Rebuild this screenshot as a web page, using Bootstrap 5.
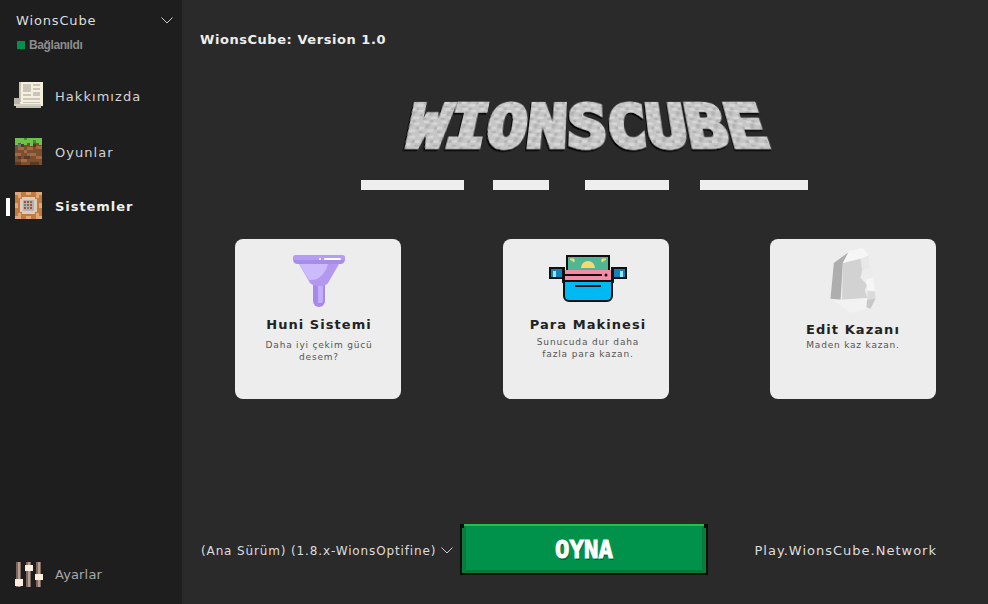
<!DOCTYPE html>
<html lang="tr">
<head>
<meta charset="utf-8">
<title>WionsCube</title>
<link href="https://cdn.jsdelivr.net/npm/bootstrap@5.3.0/dist/css/bootstrap.min.css" rel="stylesheet">
<style>
html,body{height:100%;margin:0}
body{background:#2a2a2a;font-family:"DejaVu Sans",Verdana,sans-serif;overflow:hidden}
.shell{height:604px}
.side{width:182px;background:#1e1e1e;flex:none;color:#ddd}
.acct{padding:12px 9px 0 16px;font-size:13px;letter-spacing:.85px;line-height:17px;color:#ddd}
.acct svg{display:block}
.stat{padding:9px 0 0 17px;font:bold 12px/14px "Liberation Sans",Arial,sans-serif;letter-spacing:-.4px;color:#8c8c8c;gap:4px}
.dot{width:8px;height:8px;background:#00924a;display:block}
.menu{padding-top:31px}
.entry{height:28px;padding:0 0 0 14px;margin-bottom:28px;color:#d4d4d4;font-size:13px;letter-spacing:1.05px;position:relative;gap:11px}
.entry:hover{color:#fff}
.entry.cur{color:#eee;font-weight:700;margin-top:-2px;letter-spacing:.95px}
.entry.cur::before{content:"";position:absolute;left:6px;top:5px;width:4px;height:18px;background:#fff}
.entry svg{flex:none;width:30px;height:30px;margin-bottom:2px}
.foot-entry{color:#a8a8a8;font-size:13px;letter-spacing:.15px;margin:0 0 15px}
.stage{min-width:0;padding:0}
.ttl{font-weight:700;font-size:13px;letter-spacing:.55px;color:#eee;margin:32px 0 0 18px;line-height:16px}
.logo{display:block;margin:49px auto 0 220px;width:370px;height:56px;transform:perspective(300px) rotateX(30deg);overflow:visible}
.logotext{font:700 67px "DejaVu Sans Mono",monospace;stroke-width:5;stroke-linejoin:miter}
.strips{margin:27px 0 0 179px}
.strips i{display:block;height:10px;background:#eee}
.s1{width:103px;margin-right:29px}.s2{width:56px;margin-right:36px}.s3{width:84px;margin-right:31px}.s4{width:108px}
.cards{margin:49px 0 0 53px;gap:102px}
.tile{width:166px;height:160px;background:#ededed;border:0;border-radius:8px;color:#222;flex:none}
.tile:nth-child(2){margin-right:-1px}
.tile h3{font:700 13px/16px "DejaVu Sans",Verdana,sans-serif;letter-spacing:1.05px;margin:0;color:#222}
.tile p{font-size:9px;line-height:11.5px;letter-spacing:.8px;color:#555;margin:0}
.t1{padding:16px 20px 0 22px}.t1 svg{margin-bottom:10px}.t1 h3{margin-bottom:7px}
.t2{padding:16px 18px 0 22px}.t2 svg{margin-bottom:15px}.t2 h3{margin-bottom:3px}.t2 p{line-height:12px;letter-spacing:.85px}
.t3{padding:9px 20px 0}.t3 svg{margin-bottom:9px}.t3 h3{margin-bottom:2px}.t3 p{letter-spacing:.8px}
.dock{margin:auto 51px 29px 19px}
.ver{font-size:12px;letter-spacing:.87px;color:#ddd;gap:5px;width:259px;flex:none;padding-top:2px}
.play{width:248px;height:51px;padding:0;border-radius:0;border:2px solid #0a0f0a;border-top-color:#22c24a;background:#00924a;box-shadow:inset 4px 0 #0a7a40,inset -4px 0 #0a7a40,inset 0 -3px #067a3c;color:#fff;font:700 24px/1 "DejaVu Sans Mono",monospace;letter-spacing:0;text-shadow:1px 2px #06603a;-webkit-text-stroke:1px #fff;position:relative;flex:none}
.play:hover{background:#00924a;color:#fff}
.play::before,.play::after{content:"";position:absolute;top:-2px;width:4px;height:4px;background:#0a0f0a}
.play::before{left:-2px}.play::after{right:-2px}
.srv{font-size:13px;letter-spacing:1px;color:#ddd;margin-left:auto;white-space:nowrap;padding-top:2px}
</style>
</head>
<body>
<div class="shell d-flex">
  <aside class="side d-flex flex-column">
    <div class="acct d-flex justify-content-between align-items-center">
      <span>WionsCube</span>
      <svg width="12" height="7" viewBox="0 0 12 7"><path d="M.5.5 6 6 11.5.5" fill="none" stroke="#ccc"/></svg>
    </div>
    <div class="stat d-flex align-items-center"><span class="dot"></span><span>Bağlanıldı</span></div>
    <nav class="menu nav flex-column">
      <a class="entry nav-link d-flex align-items-center" href="#">
        <svg viewBox="1 0 30 30" shape-rendering="crispEdges">
          <rect x="7" y="1" width="23" height="24" fill="#f5efdd"/><rect x="6" y="1" width="2" height="20" fill="#c9c3b3"/>
          <rect x="1" y="17" width="6" height="7" fill="#b9b5a8"/><rect x="1" y="23" width="27" height="2" fill="#d6d0c0"/><rect x="3" y="25" width="25" height="2" fill="#c4beae"/>
          <rect x="10" y="3" width="8" height="8" fill="#cbc5ba"/><rect x="20" y="3" width="7" height="2" fill="#cbc5ba"/><rect x="20" y="7" width="7" height="2" fill="#cbc5ba"/>
          <rect x="10" y="13" width="8" height="2" fill="#cbc5ba"/><rect x="20" y="11" width="7" height="4" fill="#cbc5ba"/><rect x="10" y="17" width="17" height="2" fill="#cbc5ba"/><rect x="10" y="21" width="17" height="1" fill="#cbc5ba"/>
        </svg>
        <span>Hakkımızda</span>
      </a>
      <a class="entry nav-link d-flex align-items-center" href="#">
        <svg viewBox="0 0 30 30" shape-rendering="crispEdges">
          <rect x="1" y="1" width="27" height="27" fill="#7a5030"/>
          <rect x="1" y="1" width="27" height="5" fill="#6cc24a"/>
          <path fill="#6cc24a" d="M1 6h3v2H1zM7 6h6v2H7zM16 6h3v3h-3zM25 6h3v2h-3z"/>
          <path fill="#4a8a34" d="M10 1h3v2h-3zM19 3h3v3h-3z"/>
          <path fill="#a56a42" d="M4 10h6v3H4zM13 10h6v3h-6zM22 9h6v3h-6zM1 16h6v3H1zM16 16h6v3h-6zM7 22h6v3H7zM22 19h6v3h-6zM10 13h3v3h-3z"/>
          <path fill="#5a3a22" d="M7 7h3v3H7zM19 7h3v3h-3zM10 19h6v3h-6zM1 25h6v3H1zM16 25h9v3h-9zM4 19h3v3H4z"/>
          <path fill="#6f6f6f" d="M4 7h3v3H4zM13 16h3v3h-3z"/>
        </svg>
        <span>Oyunlar</span>
      </a>
      <a class="entry cur nav-link d-flex align-items-center" href="#">
        <svg viewBox="0 0 30 30" shape-rendering="crispEdges">
          <rect x="1" y="1" width="27" height="27" fill="#c27a3e"/>
          <path fill="#e0a878" d="M1 1h6v3H1zM22 1h6v3h-6zM1 25h6v3H1zM22 25h6v3h-6zM4 4h3v3H4zM22 4h3v3h-3zM4 22h3v3H4zM22 22h3v3h-3zM12 1h5v3h-5zM12 25h5v3h-5zM1 12h3v5H1zM25 12h3v5h-3z"/>
          <rect x="7" y="7" width="15" height="15" fill="#8b8b85"/>
          <rect x="8" y="6" width="13" height="17" fill="#d8cdbf"/>
          <rect x="6" y="8" width="17" height="13" fill="#d8cdbf"/>
          <rect x="9" y="9" width="11" height="11" fill="#b5b1aa"/>
          <path fill="#b5483c" d="M10 10h2v2h-2zM13 10h2v2h-2zM10 16h2v2h-2zM16 13h2v2h-2zM16 16h2v2h-2z"/>
          <path fill="#6b7f4f" d="M16 10h2v2h-2zM13 13h2v2h-2z"/>
          <path fill="#7a7a7a" d="M10 13h2v2h-2zM13 16h2v2h-2z"/>
        </svg>
        <span>Sistemler</span>
      </a>
    </nav>
    <a class="entry foot-entry nav-link d-flex align-items-center mt-auto" href="#">
      <svg viewBox="0 0 30 30" shape-rendering="crispEdges">
        <path fill="#7d675d" d="M2 3h5v25H2zM12 3h5v25h-5zM22 3h5v25h-5z"/>
        <path fill="#b39f94" d="M4 3h2v25H4zM14 3h2v25h-2zM24 3h2v25h-2z"/>
        <path fill="#fdeee0" d="M1 20h8v7H1zM11 6h8v6h-8zM21 15h8v6h-8z"/>
      </svg>
      <span>Ayarlar</span>
    </a>
  </aside>
  <main class="stage flex-grow-1 d-flex flex-column">
    <div class="ttl">WionsCube: Version 1.0</div>
    <svg class="logo" viewBox="0 0 370 56" role="img" aria-label="WionsCube">
      <defs>
        <pattern id="stone" width="18" height="15" patternUnits="userSpaceOnUse">
          <rect width="18" height="15" fill="#c6c6c6"/>
          <path fill="#d6d6d6" d="M0 0h5v3H0zM9 3h6v3H9zM3 8h5v3H3zM12 10h5v3h-5z"/>
          <path fill="#b2b2b2" d="M6 0h3v2H6zM1 5h4v2H1zM9 7h3v3H9zM15 0h3v3h-3zM6 12h4v3H6z"/>
        </pattern>
        <filter id="lift" x="-5%" y="-10%" width="110%" height="130%">
          <feDropShadow dx="-1" dy="2" stdDeviation=".3" flood-color="#000"/>
        </filter>
      </defs>
      <text class="logotext" x="7" y="52" textLength="356" lengthAdjust="spacingAndGlyphs" fill="url(#stone)" stroke="url(#stone)" filter="url(#lift)">WIONSCUBE</text>
    </svg>
    <div class="strips d-flex"><i class="s1"></i><i class="s2"></i><i class="s3"></i><i class="s4"></i></div>
    <div class="cards d-flex">
      <div class="tile t1 card align-items-center text-center">
        <svg width="52" height="52" viewBox="0 0 52 52">
          <path d="M20 28h12v18a6 6 0 0 1-12 0z" fill="#a888ea"/>
          <path d="M25 30h5v15c0 2-1 3-2 3h-3z" fill="#c2adf8"/>
          <path d="M6 9h40L35 28c-2 4-15 4-18 0z" fill="#b498f0"/>
          <path d="M6 9h29c-3 10-9 17-19 16z" fill="#cbbafc"/>
          <rect width="52" height="9" rx="4.500" fill="#a88ce9"/>
          <rect width="52" height="5" rx="2.500" fill="#b59df2"/>
          <rect x="31" y="3" width="17" height="2" rx="1" fill="#fff"/><rect x="26" y="3" width="2" height="2" rx="1" fill="#fff"/>
        </svg>
        <h3>Huni Sistemi</h3>
        <p>Daha iyi çekim gücü desem?</p>
      </div>
      <div class="tile t2 card align-items-center text-center">
        <svg width="78" height="47" viewBox="0 0 78 47">
          <rect x="18" y="1" width="42" height="18" fill="#4fb892" stroke="#111" stroke-width="2"/>
          <path d="M32 13a7 7 0 0 1 14 0z" fill="#f7d774"/><path d="M21 4h4v3zM57 4h-4v3z" fill="#f7d774" stroke="#f7d774"/>
          <path d="M1 13h14v10H1zM63 13h14v10H63z" fill="#1283b8" stroke="#111" stroke-width="2"/>
          <path d="M4 16h3v6H4zM71 16h3v6h-3z" fill="#9be4fa"/>
          <path d="M8 13h6v14l3 4M70 13h-6v14l-3 4" fill="#1283b8" stroke="#111" stroke-width="2"/>
          <path d="M15 16h48v25a5 5 0 0 1-5 5H20a5 5 0 0 1-5-5z" fill="#00b9f2" stroke="#111" stroke-width="2"/>
          <rect x="16" y="15" width="46" height="10" fill="#f58ba6"/>
          <path d="M16 20h37" stroke="#111" stroke-width="2"/><path d="M16 26h46M26 31h26" stroke="#111" stroke-width="2"/>
          <circle cx="57" cy="20" r="1.500" fill="#111"/>
        </svg>
        <h3>Para Makinesi</h3>
        <p>Sunucuda dur daha<br> fazla para kazan.</p>
      </div>
      <div class="tile t3 card align-items-center text-center">
        <svg width="46" height="65" viewBox="195 40 135 195">
          <path d="M205 85 250 52 232 85 225 200 195 192z" fill="#aeaeae"/>
          <path d="M232 85 285 70 300 120 285 130 305 150 298 165 305 190 230 195z" fill="#d2d2d2"/>
          <path d="M232 85 250 50 290 40 310 62 285 72z" fill="#f6f6f6"/>
          <path d="M285 72 310 62 312 100 290 105z" fill="#e8e8e8"/>
          <path d="M290 105 318 100 320 128 285 130z" fill="#ececec"/>
          <path d="M300 135 322 128 328 170 306 165z" fill="#f6f6f6"/>
          <path d="M306 170 328 170 330 192 305 195z" fill="#dadada"/>
          <path d="M195 192 230 195 305 190 302 222 258 235z" fill="#f2f2f2"/>
          <path d="M305 195 330 192 315 222 303 218z" fill="#c8c8c8"/>
        </svg>
        <h3>Edit Kazanı</h3>
        <p>Maden kaz kazan.</p>
      </div>
    </div>
    <div class="dock d-flex align-items-center">
      <div class="ver d-flex align-items-center">
        <span>(Ana Sürüm) (1.8.x-WionsOptifine)</span>
        <svg width="12" height="7" viewBox="0 0 12 7"><path d="M.5.5 6 6 11.500.5" fill="none" stroke="#ccc"/></svg>
      </div>
      <button class="play btn" type="button">OYNA</button>
      <div class="srv">Play.WionsCube.Network</div>
    </div>
  </main>
</div>
<script src="https://cdn.jsdelivr.net/npm/bootstrap@5.3.0/dist/js/bootstrap.bundle.min.js"></script>
</body>
</html>
